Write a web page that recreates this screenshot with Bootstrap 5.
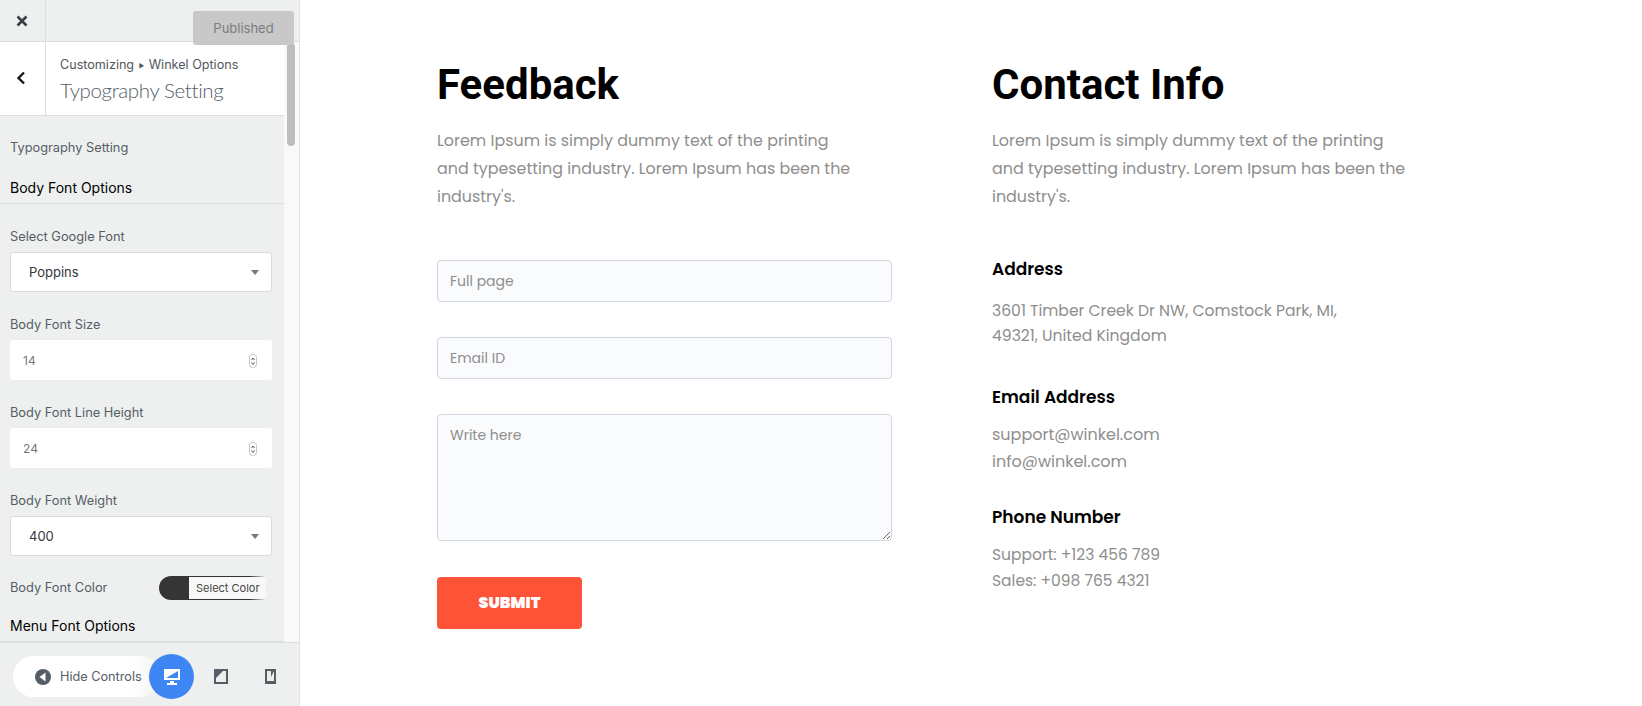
<!DOCTYPE html>
<html lang="en"><head><meta charset="utf-8"><title>Contact</title>
<link href="https://cdn.jsdelivr.net/npm/bootstrap@5.3.0/dist/css/bootstrap.min.css" rel="stylesheet">
<style>
html,body{height:706px;overflow:hidden;background:#fff}
body{font-family:"Open Sans","Liberation Sans",sans-serif}
.shell{height:706px}
.side{width:300px;flex:none;height:706px;background:#eef0f0;border-right:1px solid #e2e4e7;position:relative;overflow:hidden;font-family:Inter,"Liberation Sans",sans-serif;color:#555d66}
.topbar{height:42px;border-bottom:1px solid #dcdfe0;flex:none}
.closer{width:46px;border-right:1px solid #dcdfe0;padding-right:2px}
.pub{position:absolute;left:193px;top:11px;width:101px;height:34px;background:#c8c8c8;color:#7d7d7d;border-radius:3px;font-size:13px;line-height:35px;text-align:center;z-index:3}
.scrollbox{flex:1;min-height:0;overflow:hidden}
.pane{width:284px;flex:none;overflow:hidden}
.track{flex:1;background:#f9f9f9;position:relative}
.thumb{position:absolute;left:3px;top:1px;width:8px;height:103px;background:#bdbdbd;border-radius:4px}
.head{height:74px;background:#fff;border-bottom:1px solid #dcdfe0}
.back{width:46px;border-right:1px solid #dcdfe0;padding:0 3px 2px 0}
.headtxt{padding-left:14px}
.crumb{font-size:12.6px;color:#50575e;line-height:18px;margin-top:14px;white-space:nowrap}
.crumb i{font-style:normal;font-size:6px;vertical-align:1px;margin:0 1px}
.ptitle{font-family:Lato,"Liberation Sans",sans-serif;font-size:20.5px;font-weight:300;color:#555d66;line-height:26px;margin-top:2px;letter-spacing:-.37px;white-space:nowrap}
.lab{font-size:12.8px;color:#555d66;line-height:18px;padding-left:10px}
.lab.stack{margin-top:24px;margin-bottom:6px}
.sec{font-size:14px;color:#000;line-height:18px;font-weight:400}
.rule{border-bottom:1px solid #dcdfe0;padding:0 10px 6px}
.fld{margin:0 12px 0 10px;width:262px;height:40px;background:#fff;border-radius:3px;display:flex;align-items:center;justify-content:space-between;padding:1px 12px 0 18px;font-size:13px;color:#32373c}
.fld.boxed{border:1px solid #d9dbdc}
.fld.num{padding-left:13px;color:#777;font-size:12px;padding-right:15px}
.caret{width:0;height:0;border-left:4px solid transparent;border-right:4px solid transparent;border-top:5px solid #777}
.swatch{width:107px;height:24px;border-radius:12px 0 0 12px;background:linear-gradient(90deg,#353535 85%,#f4f4f4);overflow:hidden;padding:1px 0 1px 30px}
.swatch span{display:block;background:#f8f8f8;color:#444;height:22px;line-height:22px;font-size:11px;padding-left:7px;white-space:nowrap;width:77px}
.colorrow{margin:20px 18px 0 0}
.foot{height:64px;flex:none;border-top:1px solid #dcdfe0;background:#eef0f0;position:relative;overflow:visible}
.hide{position:absolute;left:13px;top:13px;width:148px;height:41px;border-radius:21px;background:linear-gradient(90deg,#fff 80%,#f1f2f2);display:flex;align-items:center;padding-left:22px;gap:9px;font-size:12.7px;color:#555d66;white-space:nowrap;overflow:hidden}
.dev{position:absolute;left:149px;top:11px;width:45px;height:45px;border-radius:50%;background:#3f86f5;display:flex;align-items:center;justify-content:center}
.dev2{position:absolute;top:26px}
.main{flex:1;padding:0 0 0 137px;color:#8d8d8d;font-family:"Poppins","Inter","Open Sans",sans-serif}
.lcol{width:555px;flex:none}
.rcol{width:440px;flex:none}
.bigh{font-family:Roboto,"Liberation Sans",sans-serif;font-weight:700;font-size:42px;line-height:50px;color:#000;margin:60px 0 17px}
.intro{font-size:15.92px;line-height:28px;color:#8e8e8e;margin:0;width:420px}
.inp{display:block;width:455px;background:#fafbfd;border:1px solid #d0d6e0;border-radius:4px;color:#8e8e8e;font-size:14px;height:42px;padding:0 12px;outline:0;font-family:inherit}
.inp::placeholder{color:#8e8e8e;opacity:1}
textarea.inp{height:127px;padding:10px 12px}
.go{display:block;width:145px;height:52px;background:#ff5337;color:#fff;border:0;border-radius:4px;font-family:inherit;font-weight:900;font-size:15.8px}
.sub{font-size:17px;font-weight:600;color:#000;line-height:24px;margin:0;font-family:inherit}
.val{font-size:15.5px;line-height:26px;color:#8e8e8e;margin:13px 0 0}
.val.addr{line-height:25px;margin-top:17px;width:370px;font-size:15.6px}
.val.mail{font-size:16px;line-height:27px;margin-top:12px}
</style></head><body>
<div class="shell d-flex">
 <aside class="side d-flex flex-column">
  <div class="topbar d-flex">
   <div class="closer d-flex align-items-center justify-content-center"><svg width="12" height="12" viewBox="0 0 12 12"><path d="M1.5 1.5l9 9m0-9l-9 9" stroke="#3a3f44" stroke-width="2.6"/></svg></div>
  </div>
  <div class="pub">Published</div>
  <div class="scrollbox d-flex">
   <div class="pane">
    <div class="head d-flex">
     <div class="back d-flex align-items-center justify-content-center"><svg width="10" height="14" viewBox="0 0 10 14"><path d="M8 1.5L2.5 7 8 12.5" fill="none" stroke="#16191c" stroke-width="2.4"/></svg></div>
     <div class="headtxt flex-grow-1"><div class="crumb">Customizing <i>&#9654;</i> Winkel Options</div><div class="ptitle">Typography Setting</div></div>
    </div>
    <div class="lab" style="margin-top:23px">Typography Setting</div>
    <div class="rule sec" style="margin-top:22px">Body Font Options</div>
    <div class="lab stack">Select Google Font</div>
    <div class="fld boxed"><span>Poppins</span><span class="caret"></span></div>
    <div class="lab stack">Body Font Size</div>
    <div class="fld num"><span>14</span><svg width="8" height="14" viewBox="0 0 8 14"><rect x=".5" y=".5" width="7" height="13" rx="3" fill="#fff" stroke="#c4c4c4"/><path d="M2.500 6L4 4l1.500 2M2.500 8.500L4 10.500l1.500-2" fill="none" stroke="#555"/></svg></div>
    <div class="lab stack">Body Font Line Height</div>
    <div class="fld num"><span>24</span><svg width="8" height="14" viewBox="0 0 8 14"><rect x=".5" y=".5" width="7" height="13" rx="3" fill="#fff" stroke="#c4c4c4"/><path d="M2.500 6L4 4l1.500 2M2.500 8.500L4 10.500l1.500-2" fill="none" stroke="#555"/></svg></div>
    <div class="lab stack">Body Font Weight</div>
    <div class="fld boxed"><span>400</span><span class="caret"></span></div>
    <div class="colorrow d-flex align-items-center justify-content-between"><span class="lab">Body Font Color</span><div class="swatch"><span>Select Color</span></div></div>
    <div class="rule sec" style="margin-top:17px">Menu Font Options</div>
   </div>
   <div class="track"><div class="thumb"></div></div>
  </div>
  <div class="foot">
   <div class="hide"><svg width="16" height="16" viewBox="0 0 16 16"><circle cx="8" cy="8" r="8" fill="#555d66"/><path d="M10.500 3.500v9L4.500 8z" fill="#fff"/></svg><span>Hide Controls</span></div>
   <div class="dev"><svg width="18" height="18" viewBox="0 0 18 18"><path d="M1 1h16v11H1z" fill="#fff"/><path d="M3 10l12-7v7z" fill="#3f86f5"/><path d="M7 13h4v2h3v2H4v-2h3z" fill="#fff"/></svg></div>
   <svg class="dev2" style="left:214px" width="14" height="15" viewBox="0 0 14 15"><path d="M0 0h14v15H0z" fill="#555d66"/><path d="M2 2h10v11H2z" fill="#eee"/><path d="M2 2h7L2 9z" fill="#555d66"/></svg>
   <svg class="dev2" style="left:265px" width="11" height="15" viewBox="0 0 11 15"><path d="M0 0h11v15H0z" fill="#555d66"/><path d="M2 2h7v10H2z" fill="#eee"/><path d="M6 2h3L6 8z" fill="#555d66"/></svg>
  </div>
 </aside>
 <main class="main d-flex">
  <section class="lcol">
   <h1 class="bigh">Feedback</h1>
   <p class="intro">Lorem Ipsum is simply dummy text of the printing and typesetting industry. Lorem Ipsum has been the industry's.</p>
   <form>
    <input class="inp" style="margin-top:49px" placeholder="Full page">
    <input class="inp" style="margin-top:35px" placeholder="Email ID">
    <textarea class="inp" style="margin-top:35px" placeholder="Write here"></textarea>
    <button type="button" class="go" style="margin-top:36px">SUBMIT</button>
   </form>
  </section>
  <section class="rcol">
   <h2 class="bigh">Contact Info</h2>
   <p class="intro">Lorem Ipsum is simply dummy text of the printing and typesetting industry. Lorem Ipsum has been the industry's.</p>
   <h3 class="sub" style="margin-top:46px">Address</h3>
   <p class="val addr">3601 Timber Creek Dr NW, Comstock Park, MI, 49321, United Kingdom</p>
   <h3 class="sub" style="margin-top:37px">Email Address</h3>
   <p class="val mail">support@winkel.com<br>info@winkel.com</p>
   <h3 class="sub" style="margin-top:30px">Phone Number</h3>
   <p class="val">Support: +123 456 789<br>Sales: +098 765 4321</p>
  </section>
 </main>
</div>
</body></html>
